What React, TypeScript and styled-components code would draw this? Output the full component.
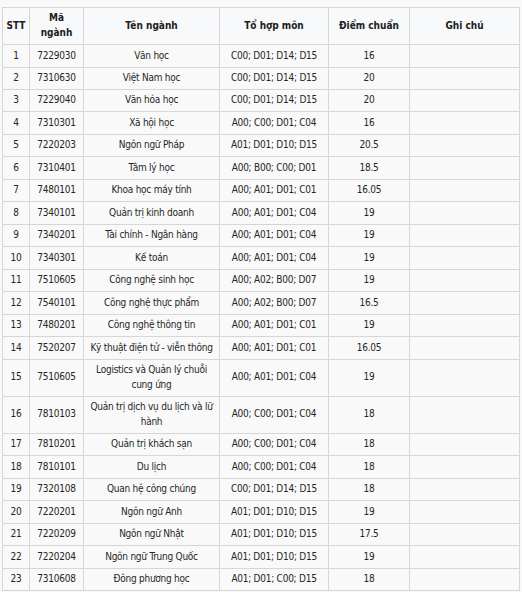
import React from "react";
import styled, { createGlobalStyle } from "styled-components";

const Global = createGlobalStyle`
  html, body {
    margin: 0;
    padding: 0;
    background: #f9f9f9;
  }
`;

const Page = styled.div`
  padding: 7px 0 0 2px;
  font-family: "DejaVu Sans Condensed", "DejaVu Sans", sans-serif;
  font-stretch: condensed;
  font-size: 10px;
  color: #252525;
`;

const Table = styled.table`
  border-collapse: collapse;
  table-layout: fixed;
  width: 517px;
  background: #f9f9f9;
`;

const Th = styled.th`
  border: 1px solid #d6d6d6;
  background: #f8f9fa;
  font-weight: bold;
  text-align: center;
  vertical-align: middle;
  line-height: 14.6px;
  padding: 3.45px 2px;
  color: #202020;
`;

const Td = styled.td`
  border: 1px solid #d6d6d6;
  text-align: center;
  vertical-align: middle;
  line-height: 14.6px;
  padding: 3.45px 2px;
  letter-spacing: -0.25px;
`;

const rows: [string, string, string, string, string][] = [
  ["1", "7229030", "Văn học", "C00; D01; D14; D15", "16"],
  ["2", "7310630", "Việt Nam học", "C00; D01; D14; D15", "20"],
  ["3", "7229040", "Văn hóa học", "C00; D01; D14; D15", "20"],
  ["4", "7310301", "Xã hội học", "A00; C00; D01; C04", "16"],
  ["5", "7220203", "Ngôn ngữ Pháp", "A01; D01; D10; D15", "20.5"],
  ["6", "7310401", "Tâm lý học", "A00; B00; C00; D01", "18.5"],
  ["7", "7480101", "Khoa học máy tính", "A00; A01; D01; C01", "16.05"],
  ["8", "7340101", "Quản trị kinh doanh", "A00; A01; D01; C04", "19"],
  ["9", "7340201", "Tài chính - Ngân hàng", "A00; A01; D01; C04", "19"],
  ["10", "7340301", "Kế toán", "A00; A01; D01; C04", "19"],
  ["11", "7510605", "Công nghệ sinh học", "A00; A02; B00; D07", "19"],
  ["12", "7540101", "Công nghệ thực phẩm", "A00; A02; B00; D07", "16.5"],
  ["13", "7480201", "Công nghệ thông tin", "A00; A01; D01; C01", "19"],
  ["14", "7520207", "Kỹ thuật điện tử - viễn thông", "A00; A01; D01; C01", "16.05"],
  ["15", "7510605", "Logistics và Quản lý chuỗi cung ứng", "A00; A01; D01; C04", "19"],
  ["16", "7810103", "Quản trị dịch vụ du lịch và lữ hành", "A00; C00; D01; C04", "18"],
  ["17", "7810201", "Quản trị khách sạn", "A00; C00; D01; C04", "18"],
  ["18", "7810101", "Du lịch", "A00; C00; D01; C04", "18"],
  ["19", "7320108", "Quan hệ công chúng", "C00; D01; D14; D15", "18"],
  ["20", "7220201", "Ngôn ngữ Anh", "A01; D01; D10; D15", "19"],
  ["21", "7220209", "Ngôn ngữ Nhật", "A01; D01; D10; D15", "17.5"],
  ["22", "7220204", "Ngôn ngữ Trung Quốc", "A01; D01; D10; D15", "19"],
  ["23", "7310608", "Đông phương học", "A01; D01; C00; D15", "18"],
];

const widths = [27, 54, 136, 109, 81, 110];

export default function App() {
  return (
    <Page>
      <Global />
      <Table>
        <colgroup>
          {widths.map((w, i) => (
            <col key={i} style={{ width: w }} />
          ))}
        </colgroup>
        <thead>
          <tr>
            <Th>STT</Th>
            <Th>Mã ngành</Th>
            <Th>Tên ngành</Th>
            <Th>Tổ hợp môn</Th>
            <Th>Điểm chuẩn</Th>
            <Th>Ghi chú</Th>
          </tr>
        </thead>
        <tbody>
          {rows.map((r) => (
            <tr key={r[0]}>
              {r.map((c, i) => (
                <Td key={i}>{c}</Td>
              ))}
              <Td />
            </tr>
          ))}
        </tbody>
      </Table>
    </Page>
  );
}
